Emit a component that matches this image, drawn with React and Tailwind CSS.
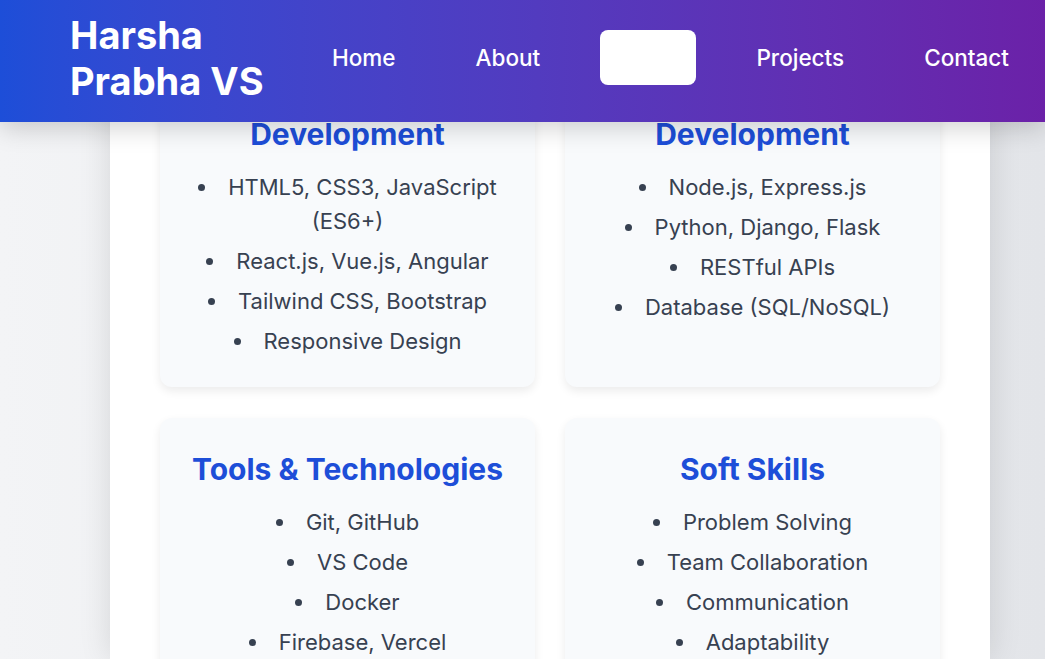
import React from "react";

const cards = [
  { title: ["Frontend", "Development"], items: ["HTML5, CSS3, JavaScript (ES6+)", "React.js, Vue.js, Angular", "Tailwind CSS, Bootstrap", "Responsive Design"] },
  { title: ["Backend", "Development"], items: ["Node.js, Express.js", "Python, Django, Flask", "RESTful APIs", "Database (SQL/NoSQL)"] },
  { title: ["Tools & Technologies"], items: ["Git, GitHub", "VS Code", "Docker", "Firebase, Vercel", "Postman"] },
  { title: ["Soft Skills"], items: ["Problem Solving", "Team Collaboration", "Communication", "Adaptability", "Time Management"] },
];

function Card({ title, items }) {
  return (
    <div className="bg-[#f8fafc] rounded-xl shadow-[0_4px_10px_rgba(0,0,0,0.08)] pt-[33px] pb-[26px] px-[24px] text-center">
      <h3 className="text-[30px] leading-[36px] font-bold text-[#1d4ed8] mb-[15px]">
        {title.map((t, i) => (
          <React.Fragment key={i}>
            {i > 0 && <br />}
            {t}
          </React.Fragment>
        ))}
      </h3>
      <ul>
        {items.map((it) => (
          <li key={it} className="py-[3px] text-[22px] leading-[34px] text-[#374151]">
            <span className="inline-block w-[7px] h-[7px] rounded-full bg-[#374151] align-middle mr-[23px] relative top-[-2px]"></span>
            {it}
          </li>
        ))}
      </ul>
    </div>
  );
}

export default function App() {
  return (
    <div className="relative h-[659px] overflow-hidden bg-gradient-to-r from-[#f3f4f6] to-[#e3e5e9]" style={{ fontFamily: "Inter, 'Noto Sans', sans-serif" }}>
      <header className="absolute top-0 left-0 right-0 z-10 h-[122px] flex items-center justify-between pl-[70px] pr-[16px] pb-[7px] bg-gradient-to-r from-[#1d4ed8] to-[#6b21a8] shadow-[0_6px_24px_rgba(0,0,0,0.18)]">
        <div className="text-white font-bold text-[38px] leading-[46px] w-[215px]">Harsha Prabha VS</div>
        <nav className="flex items-center gap-[40px]">
          {["Home", "About", "Skills", "Projects", "Contact"].map((n) => (
            <a
              key={n}
              className={
                "h-[55px] flex items-center px-5 rounded-lg text-[22.5px] font-medium text-white " +
                (n === "Skills" ? "bg-white" : "")
              }
            >
              {n}
            </a>
          ))}
        </nav>
      </header>
      <main className="ml-[110px] w-[880px] h-full bg-white shadow-[0_0_30px_rgba(0,0,0,0.12)] px-[50px] pt-[47px]">
        <div className="grid grid-cols-2 gap-x-[30px] gap-y-[31px]">
          {cards.map((c) => (
            <Card key={c.title.join(" ")} {...c} />
          ))}
        </div>
      </main>
    </div>
  );
}
